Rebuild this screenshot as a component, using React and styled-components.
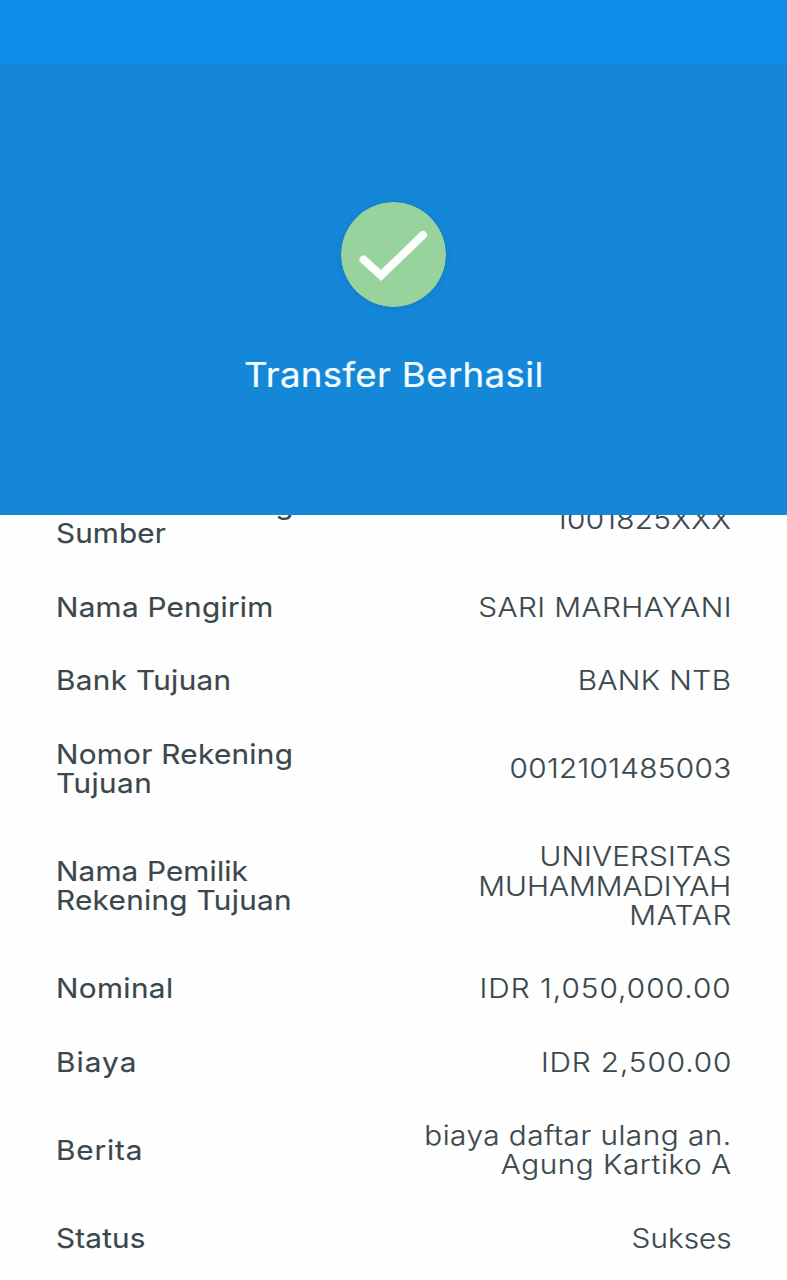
import React from "react";
import styled, { createGlobalStyle } from "styled-components";

// Every line carries its own tracking (px)
const details = [
  {
    label: [["Nomor Rekening", 0.31], ["Sumber", 0.1]],
    value: [["1001825XXX", 0.3]],
  },
  {
    label: [["Nama Pengirim", 0.25]],
    value: [["SARI MARHAYANI", 0.44]],
  },
  {
    label: [["Bank Tujuan", 0.3]],
    value: [["BANK NTB", 0.42]],
  },
  {
    label: [["Nomor Rekening", 0.28], ["Tujuan", 0.42]],
    value: [["0012101485003", 0.32]],
  },
  {
    label: [["Nama Pemilik", 0.15], ["Rekening Tujuan", 0.28]],
    value: [["UNIVERSITAS", 0.14], ["MUHAMMADIYAH", 0.02], ["MATAR", 0.6]],
  },
  {
    label: [["Nominal", 0.35]],
    value: [["IDR 1,050,000.00", 0.98]],
  },
  {
    label: [["Biaya", 1]],
    value: [["IDR 2,500.00", 0.84]],
  },
  {
    label: [["Berita", 0.8]],
    value: [["biaya daftar ulang an.", 0.46], ["Agung Kartiko A", 0.52]],
  },
  {
    label: [["Status", 0.18]],
    value: [["Sukses", 0.05]],
  },
];

function App() {
  return (
    <Screen>
      <GlobalStyle />
      <StatusBar />
      <Header>
        <CheckIcon viewBox="0 0 105 105">
          <circle cx="52.5" cy="52.5" r="52.5" fill="#98d29c" />
          <path
            d="M22.5 57.5 L40 73.5 L82 33"
            fill="none"
            stroke="#fdfffc"
            strokeWidth="8"
            strokeLinecap="round"
            strokeLinejoin="miter"
          />
        </CheckIcon>
        <Title>Transfer Berhasil</Title>
      </Header>
      <Details>
        {details.map((item, index) => (
          <Row key={index}>
            <Label>
              {item.label.map(([text, spacing]) => (
                <Line key={text} $spacing={spacing}>
                  {text}
                </Line>
              ))}
            </Label>
            <Value>
              {item.value.map(([text, spacing]) => (
                <Line key={text} $spacing={spacing}>
                  {text}
                </Line>
              ))}
            </Value>
          </Row>
        ))}
      </Details>
    </Screen>
  );
}

const GlobalStyle = createGlobalStyle`
  body {
    margin: 0;
    background: #fefefe;
  }
`;

const Screen = styled.div`
  display: flex;
  flex-direction: column;
  height: 1280px;
  overflow: hidden;
  font-family: Inter, "Liberation Sans", sans-serif;
  color: #3a474d;
`;

const StatusBar = styled.div`
  flex: none;
  height: 64px;
  background: #0f8beb;
`;

const Header = styled.header`
  flex: none;
  z-index: 1;
  box-sizing: border-box;
  height: 451px;
  padding-top: 138px;
  display: flex;
  flex-direction: column;
  align-items: center;
  background: #1587d8;
`;

const CheckIcon = styled.svg`
  width: 105px;
  height: 105px;
  border-radius: 50%;
  box-shadow: 0 1px 6px rgba(20, 90, 150, 0.3);
`;

const Title = styled.h1`
  margin: 47px 0 0 1px;
  font-size: 34px;
  font-weight: 400;
  line-height: 42px;
  letter-spacing: 0.28px;
  color: #f4fdff;
  -webkit-text-stroke: 0.2px currentColor;
  transform: scaleX(1.08);
`;

/* the list is scrolled a little under the header */
const Details = styled.div`
  flex: none;
  margin-top: -46.9px;
  padding: 0 55.8px 0 55.6px;
`;

const Row = styled.div`
  display: flex;
  justify-content: space-between;
  align-items: center;
  padding: 22.05px 0;
  font-size: 27.5px;
  line-height: 29.3px;
`;

/* both columns are stretched sideways for wider letterforms */
const Label = styled.div`
  font-weight: 400;
  -webkit-text-stroke: 0.15px currentColor;
  transform: scaleX(1.08);
  transform-origin: left;
`;

const Value = styled.div`
  font-weight: 300;
  text-align: right;
  -webkit-text-stroke: 0.15px currentColor;
  transform: scaleX(1.08);
  transform-origin: right;
`;

const Line = styled.div`
  white-space: nowrap;
  letter-spacing: ${(props) => props.$spacing}px;
  margin-right: -${(props) => props.$spacing}px;
`;

export default App;
